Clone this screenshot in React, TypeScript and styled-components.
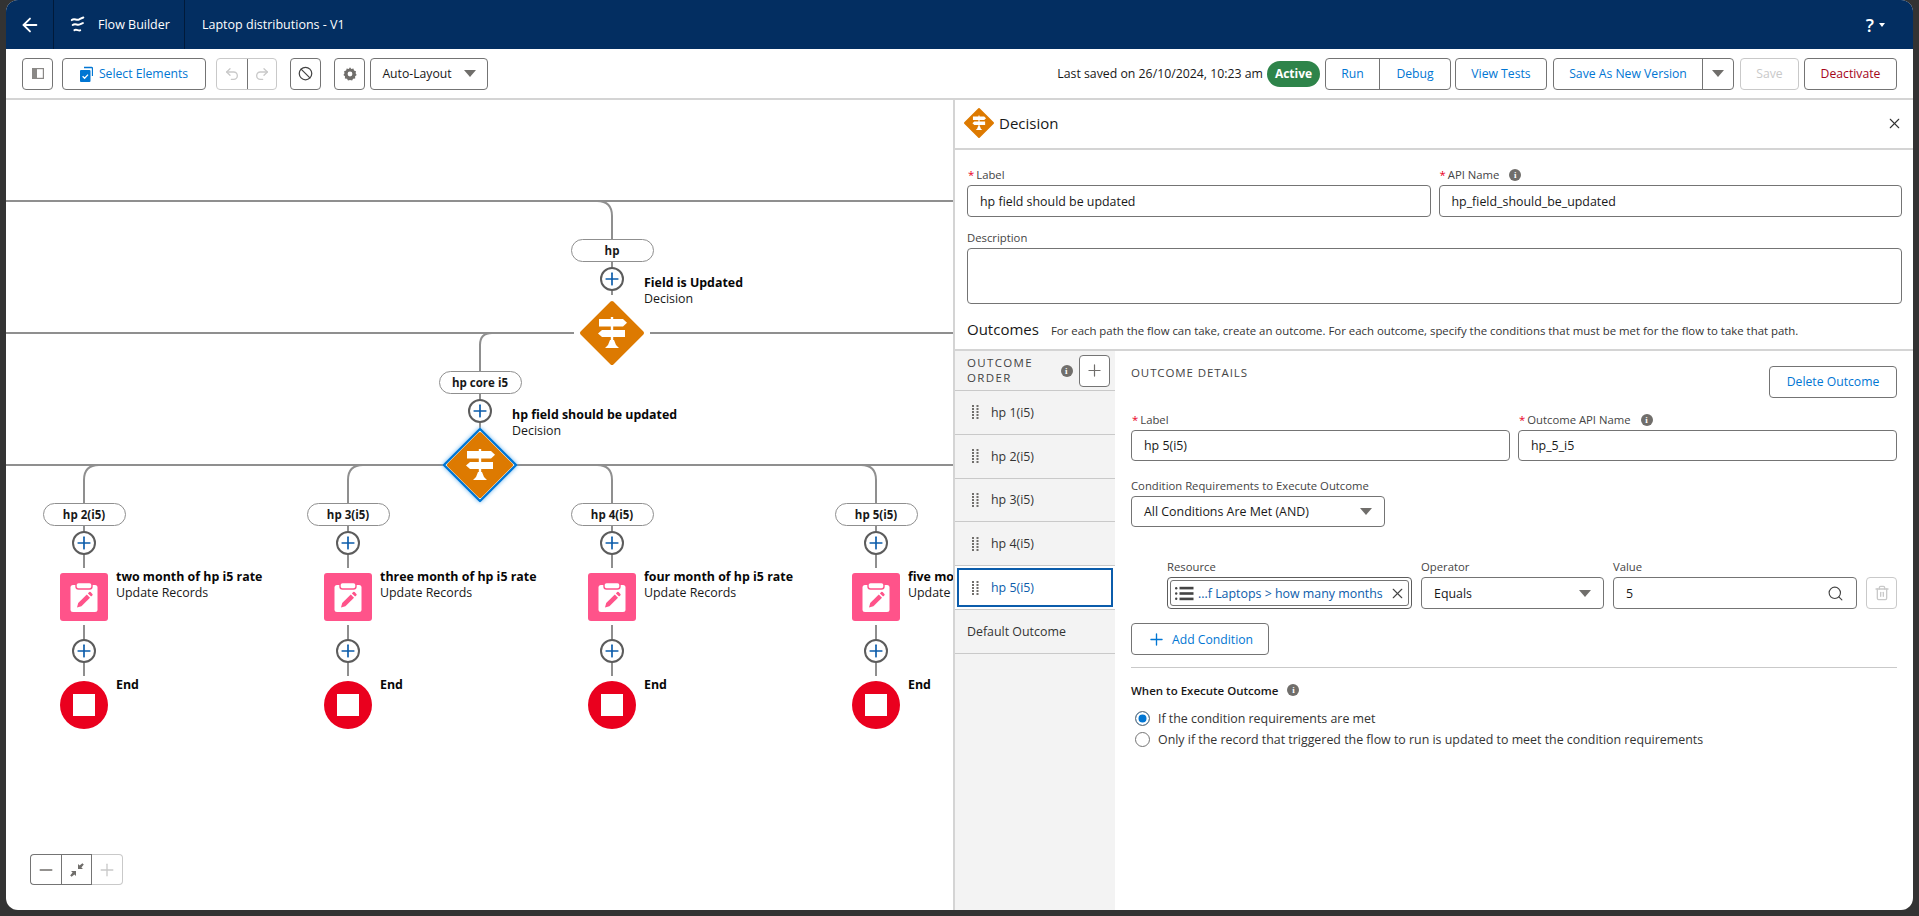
import React from "react";
import styled, { createGlobalStyle } from "styled-components";
import { Trash2, Search, X, ArrowLeft, Undo2, Redo2, Ban, Plus, Minus } from "lucide-react";

const GlobalStyle = createGlobalStyle`
  html, body { margin: 0; padding: 0; height: 100%; background: #333; overflow: hidden; }
  * { box-sizing: border-box; }
  body { font-family: "Open Sans", "Noto Sans", "Liberation Sans", sans-serif; font-size: 12.4px; color: #181818; }
`;

const CANVAS_X = 6;
const CANVAS_Y = 100;

const Frame = styled.div`
  width: 1907px;
  height: 910px;
  margin-left: 6px;
  background: #fff;
  border-radius: 12px;
  overflow: hidden;
  display: flex;
  flex-direction: column;
`;

const Nav = styled.header`
  height: 49px;
  background: #032e61;
  color: #fff;
  display: flex;
  align-items: center;
  flex-shrink: 0;
`;

const BackCell = styled.div`
  width: 48px;
  height: 100%;
  display: flex;
  align-items: center;
  justify-content: center;
  border-right: 1px solid #011a3a;
  flex-shrink: 0;
`;

const BrandCell = styled.div`
  width: 131px;
  height: 100%;
  display: flex;
  align-items: center;
  gap: 12px;
  padding-left: 16px;
  border-right: 1px solid #011a3a;
  font-size: 12.5px;
  flex-shrink: 0;
`;

const NavTitle = styled.div`
  padding-left: 17px;
  font-size: 12.5px;
  flex: 1;
`;

const HelpMenu = styled.div`
  display: flex;
  align-items: center;
  gap: 5px;
  padding-right: 28px;
  font-size: 18px;
  font-weight: 600;
  i {
    width: 0;
    height: 0;
    border-left: 3px solid transparent;
    border-right: 3px solid transparent;
    border-top: 4px solid #fff;
  }
`;

const Toolbar = styled.div`
  height: 51px;
  flex-shrink: 0;
  border-bottom: 2px solid #d4d4d4;
  display: flex;
  align-items: center;
  padding: 0 16px;
`;

const Btn = styled.div<{ $w?: number; $tone?: "brand" | "danger" | "off" | "plain"; $ml?: number; $mt?: number }>`
  height: 32px;
  width: ${(p) => (p.$w ? `${p.$w}px` : "auto")};
  margin-left: ${(p) => p.$ml ?? 0}px;
  margin-top: ${(p) => p.$mt ?? 0}px;
  flex-shrink: 0;
  display: flex;
  align-items: center;
  justify-content: center;
  gap: 6px;
  background: #fff;
  border: 1px solid ${(p) => (p.$tone === "off" ? "#c9c9c9" : "#747474")};
  border-radius: 4px;
  white-space: nowrap;
  letter-spacing: 0;
  font-size: 12.2px;
  color: ${(p) =>
    p.$tone === "danger" ? "#a5061a" : p.$tone === "off" ? "#c9c9c9" : p.$tone === "plain" ? "#181818" : "#0176d3"};
`;

const BtnGroup = styled.div<{ $ml?: number; $off?: boolean }>`
  display: flex;
  height: 32px;
  margin-left: ${(p) => p.$ml ?? 0}px;
  flex-shrink: 0;
  border: 1px solid ${(p) => (p.$off ? "#c9c9c9" : "#747474")};
  border-radius: 4px;
  overflow: hidden;
  font-size: 12.2px;
`;

const GroupItem = styled.div<{ $w: number; $off?: boolean }>`
  width: ${(p) => p.$w}px;
  display: flex;
  align-items: center;
  justify-content: center;
  color: ${(p) => (p.$off ? "#c9c9c9" : "#0176d3")};
  & + & {
    border-left: 1px solid ${(p) => (p.$off ? "#c9c9c9" : "#747474")};
  }
`;

const Caret = styled.i<{ $ml?: number }>`
  width: 0;
  height: 0;
  margin-left: ${(p) => p.$ml ?? 0}px;
  border-left: 6px solid transparent;
  border-right: 6px solid transparent;
  border-top: 7px solid #706e6b;
  flex-shrink: 0;
`;

const SavedText = styled.div`
  margin-left: auto;
  font-size: 12.3px;
  white-space: nowrap;
`;

const ActiveBadge = styled.div`
  margin-left: 4px;
  width: 53px;
  height: 26px;
  border-radius: 13px;
  background: #2e844a;
  color: #fff;
  font-weight: 700;
  font-size: 12px;
  display: flex;
  align-items: center;
  justify-content: center;
`;

const Body = styled.main`
  flex: 1;
  display: flex;
  min-height: 0;
`;

const Canvas = styled.section`
  position: relative;
  width: 947px;
  flex-shrink: 0;
  overflow: hidden;
`;

const Wires = styled.svg`
  position: absolute;
  left: 0;
  top: 0;
  fill: none;
  stroke: #8f8f8f;
  stroke-width: 2;
`;

const Pill = styled.div<{ $x: number; $y: number }>`
  position: absolute;
  left: ${(p) => p.$x - CANVAS_X - 41.5}px;
  top: ${(p) => p.$y - CANVAS_Y}px;
  width: 83px;
  height: 23px;
  background: #fff;
  border: 1px solid #8f8f8f;
  border-radius: 12px;
  font-weight: 700;
  font-size: 11.5px;
  display: flex;
  align-items: center;
  justify-content: center;
`;

const AddNode = styled.div<{ $x: number; $y: number }>`
  position: absolute;
  left: ${(p) => p.$x - CANVAS_X - 12}px;
  top: ${(p) => p.$y - CANVAS_Y - 12}px;
  width: 24px;
  height: 24px;
  border-radius: 50%;
  background: #fff;
  border: 2px solid #5c5c5c;
  color: #0b5cab;
  display: flex;
  align-items: center;
  justify-content: center;
`;

const NodeShape = styled.div<{ $x: number; $y: number; $size: number }>`
  position: absolute;
  left: ${(p) => p.$x - CANVAS_X - p.$size / 2}px;
  top: ${(p) => p.$y - CANVAS_Y - p.$size / 2}px;
  width: ${(p) => p.$size}px;
  height: ${(p) => p.$size}px;
`;

const UpdateTile = styled(NodeShape)`
  background: #ff538a;
  border-radius: 3px;
  display: flex;
  align-items: center;
  justify-content: center;
`;

const EndDot = styled(NodeShape)`
  background: #ea001e;
  border-radius: 50%;
  display: flex;
  align-items: center;
  justify-content: center;
  &::after {
    content: "";
    width: 22px;
    height: 22px;
    background: #fff;
  }
`;

const NodeText = styled.div<{ $x: number; $y: number }>`
  position: absolute;
  left: ${(p) => p.$x - CANVAS_X}px;
  top: ${(p) => p.$y - CANVAS_Y}px;
  line-height: 16px;
  font-size: 12.4px;
  white-space: nowrap;
  b {
    display: block;
    font-weight: 700;
    color: #080707;
  }
`;

const ZoomBar = styled.div`
  position: absolute;
  left: 24px;
  top: 754px;
  display: flex;
  height: 31px;
`;

const ZoomBtn = styled.div<{ $off?: boolean }>`
  width: 31px;
  height: 31px;
  background: #fff;
  border: 1px solid ${(p) => (p.$off ? "#c9c9c9" : "#747474")};
  display: flex;
  align-items: center;
  justify-content: center;
  color: ${(p) => (p.$off ? "#c9c9c9" : "#706e6b")};
  &:first-child {
    border-radius: 4px 0 0 4px;
    border-right: none;
  }
  &:last-child {
    border-left: none;
    border-radius: 0 4px 4px 0;
  }
`;

const Panel = styled.aside`
  flex: 1;
  min-width: 0;
  border-left: 2px solid #d4d4d4;
  display: flex;
  flex-direction: column;
`;

const PanelHead = styled.div`
  height: 50px;
  flex-shrink: 0;
  border-bottom: 2px solid #d4d4d4;
  display: flex;
  align-items: center;
  padding: 0 10px 2px 9px;
  gap: 5px;
  font-size: 15px;
  svg:last-child {
    margin-left: auto;
  }
`;

const PanelForm = styled.div`
  padding: 16px 11px 0 12px;
  flex-shrink: 0;
`;

const FieldRow = styled.div<{ $mt?: number }>`
  display: grid;
  grid-template-columns: 1fr 1fr;
  gap: 8px;
  margin-top: ${(p) => p.$mt ?? 0}px;
`;

const Field = styled.div<{ $mt?: number; $w?: number }>`
  margin-top: ${(p) => p.$mt ?? 0}px;
  width: ${(p) => (p.$w ? `${p.$w}px` : "auto")};
  flex-shrink: 0;
`;

const Label = styled.div`
  height: 19px;
  padding-bottom: 2px;
  line-height: 17px;
  font-size: 11.3px;
  color: #444;
  display: flex;
  align-items: center;
  gap: 2px;
  white-space: nowrap;
  em {
    color: #ea001e;
    font-style: normal;
    margin-left: 1px;
  }
`;

const InfoDot = styled.span<{ $ml?: number }>`
  width: 12px;
  height: 12px;
  margin-left: ${(p) => p.$ml ?? 8}px;
  border-radius: 50%;
  background: #706e6b;
  color: #fff;
  font: 700 9px/12px "Liberation Serif", serif;
  text-align: center;
  flex-shrink: 0;
`;

const InputBox = styled.div<{ $h?: number }>`
  height: ${(p) => p.$h ?? 32}px;
  background: #fff;
  border: 1px solid #747474;
  border-radius: 4px;
  padding: 0 12px;
  display: flex;
  align-items: center;
  justify-content: space-between;
  white-space: nowrap;
`;

const Outcomes = styled.div`
  height: 45px;
  padding-top: 13px;
  line-height: 24px;
  display: flex;
  align-items: flex-start;
  gap: 12px;
  font-size: 11.4px;
  color: #333;
  strong {
    font-size: 15px;
    font-weight: 400;
    color: #181818;
  }
  span {
    padding-top: 2px;
  }
`;

const OutcomeArea = styled.div`
  flex: 1;
  min-height: 0;
  display: flex;
  border-top: 2px solid #d4d4d4;
`;

const Sidebar = styled.nav`
  width: 160px;
  flex-shrink: 0;
  background: #f3f3f3;
`;

const SideHead = styled.div`
  height: 40px;
  padding: 0 5px 0 12px;
  display: flex;
  align-items: center;
  border-bottom: 1.5px solid #c9c9c9;
  font-size: 11.5px;
  line-height: 15px;
  letter-spacing: 1.35px;
  color: #444;
  div:first-child {
    width: 88px;
    flex-shrink: 0;
    margin-top: -2px;
  }
`;

const SquareAdd = styled.div`
  width: 31px;
  height: 32px;
  margin-left: 6px;
  background: #fff;
  border: 1px solid #747474;
  border-radius: 4px;
  display: flex;
  align-items: center;
  justify-content: center;
  color: #706e6b;
`;

const SideItem = styled.div<{ $active?: boolean; $plain?: boolean }>`
  position: relative;
  height: 43.8px;
  padding-left: ${(p) => (p.$plain ? 12 : 17)}px;
  display: flex;
  align-items: center;
  gap: 12px;
  border-bottom: 1.5px solid #c9c9c9;
  color: ${(p) => (p.$active ? "#0b5cab" : "#333")};
  background: ${(p) => (p.$active ? "#fff" : "transparent")};
  &::before {
    content: "";
    display: ${(p) => (p.$active ? "block" : "none")};
    position: absolute;
    left: 2px;
    right: 2px;
    top: 2px;
    bottom: 2px;
    border: 2px solid #0b5cab;
  }
`;

const Details = styled.div`
  flex: 1;
  min-width: 0;
  padding: 15px 16px 0;
`;

const DetailsHead = styled.div`
  display: flex;
  justify-content: space-between;
  font-size: 11.5px;
  letter-spacing: 0.9px;
  color: #444;
  line-height: 14px;
`;

const ConditionRow = styled.div`
  margin: 31px 0 0 36px;
  display: flex;
  gap: 9px;
`;

const ResourceBox = styled.div`
  height: 32px;
  border: 1px solid #5c5c5c;
  border-radius: 4px;
  padding: 2px;
`;

const ResourceInner = styled.div`
  height: 26px;
  border: 1px solid #747474;
  border-radius: 3px;
  display: flex;
  align-items: center;
  padding: 0 2px 0 4px;
  gap: 4px;
  color: #0b5cab;
  white-space: nowrap;
  svg:last-child {
    margin-left: auto;
    color: #444;
  }
`;

const Divider = styled.hr`
  margin: 12px 0 0;
  border: none;
  border-top: 1.5px solid #c9c9c9;
`;

const WhenTitle = styled.div`
  margin-top: 13px;
  height: 18px;
  display: flex;
  align-items: center;
  font-weight: 600;
  font-size: 11.5px;
  color: #181818;
`;

const RadioList = styled.div`
  margin-top: 9px;
`;

const RadioRow = styled.div`
  height: 21px;
  display: flex;
  align-items: center;
  gap: 8px;
  color: #333;
`;

const RadioMark = styled.span<{ $on?: boolean }>`
  width: 15px;
  height: 15px;
  margin-left: 4px;
  border-radius: 50%;
  border: 1px solid #747474;
  background: ${(p) => (p.$on ? "#0176d3" : "#fff")};
  box-shadow: ${(p) => (p.$on ? "inset 0 0 0 2.5px #fff" : "none")};
  flex-shrink: 0;
`;

function SignIcon() {
  return (
    <g fill="#fff" stroke="none">
      <rect x="-1.2" y="-16" width="2.4" height="26" />
      <path d="M-13-14h24l4 3.7-4 3.7h-24z" />
      <path d="M-10-3h23v7h-23l-4-3.5z" />
      <path d="M-2 7h4l2 5 3 3h-14l3-3z" />
    </g>
  );
}

function Diamond({ x, y, selected, size = 64 }: { x?: number; y?: number; selected?: boolean; size?: number }) {
  const reach = selected ? 31 : 30;
  const art = (
    <svg width={size} height={size} viewBox={selected ? "-40 -40 80 80" : "-32 -32 64 64"} style={{ display: "block", overflow: "visible" }}>
      {selected && (
        <polygon
          points="0,-36 36,0 0,36 -36,0"
          fill="#fff"
          stroke="#0176d3"
          strokeWidth="2.4"
          strokeLinejoin="round"
          style={{ filter: "drop-shadow(0 0 2px #6bb6f0)" }}
        />
      )}
      <polygon
        points={`0,${-reach} ${reach},0 0,${reach} ${-reach},0`}
        fill="#dd7a01"
        stroke="#dd7a01"
        strokeWidth="4"
        strokeLinejoin="round"
      />
      <SignIcon />
    </svg>
  );
  if (x === undefined || y === undefined) return art;
  return (
    <NodeShape $x={x} $y={y} $size={size}>
      {art}
    </NodeShape>
  );
}

function ClipboardIcon() {
  return (
    <svg width="28" height="30" viewBox="0 0 28 30">
      <rect x="0.5" y="3" width="27" height="27" rx="2.5" fill="#fff" />
      <rect x="6" y="0.5" width="16" height="6.5" rx="2.5" fill="#fff" stroke="#ff538a" strokeWidth="1.4" />
      <path d="M7 25.5l1.2-4.4 8.6-8.6 3.2 3.2-8.6 8.6z" fill="#ff538a" />
      <path d="M17.9 11.4l1.3-1.3a1 1 0 0 1 1.4 0l1.8 1.8a1 1 0 0 1 0 1.4l-1.3 1.3z" fill="#ff538a" />
    </svg>
  );
}

function LogoIcon() {
  return (
    <svg width="16" height="20" viewBox="0 0 18 20" fill="none" stroke="#fff" strokeWidth="2.2" strokeLinecap="round">
      <path d="M2 4.5c3-2.6 5 .8 8-.6 1.8-.8 3-1.8 5-2.4" />
      <path d="M3 10c3-2.2 5 .6 8-.6 1.4-.6 2-1 3.5-1.6" />
      <path d="M5 15.8c2.4-1.4 4 .8 6.5.2" />
    </svg>
  );
}

function GripIcon() {
  return (
    <svg width="7" height="14" viewBox="0 0 7 14" fill="#706e6b">
      {[0, 1, 2, 3, 4].map((r) => (
        <React.Fragment key={r}>
          <rect x="0" y={r * 3} width="2" height="2" />
          <rect x="4.5" y={r * 3} width="2" height="2" />
        </React.Fragment>
      ))}
    </svg>
  );
}

function ListIcon() {
  return (
    <svg width="19" height="15" viewBox="0 0 19 15" fill="#444">
      <rect x="0" y="1" width="2.4" height="2.4" rx="1.2" />
      <rect x="0" y="6.3" width="2.4" height="2.4" rx="1.2" />
      <rect x="0" y="11.6" width="2.4" height="2.4" rx="1.2" />
      <rect x="4.5" y="0.8" width="14" height="2.6" />
      <rect x="4.5" y="6.2" width="14" height="2.6" />
      <rect x="4.5" y="11.6" width="14" height="2.6" />
    </svg>
  );
}

function PanelToggleIcon() {
  return (
    <svg width="12" height="11" viewBox="0 0 12 11">
      <rect x="0.6" y="0.6" width="10.8" height="9.8" fill="none" stroke="#8a8886" strokeWidth="1.2" />
      <rect x="1" y="1" width="4" height="9" fill="#8a8886" />
    </svg>
  );
}

function SelectIcon() {
  return (
    <svg width="13" height="16" viewBox="0 0 13 16">
      <path d="M4 1.5h7.5a1 1 0 0 1 1 1V10" fill="none" stroke="#0176d3" strokeWidth="1.3" />
      <rect x="0" y="4" width="10.5" height="12" rx="1" fill="#0176d3" />
      <path d="M2.6 10.2l2 2 3.4-3.6" fill="none" stroke="#fff" strokeWidth="1.3" />
    </svg>
  );
}

function GearIcon() {
  return (
    <svg width="14" height="14" viewBox="0 0 14 14">
      <path
        d="M7 0.3l1.3 1.7 2.1-.4.6 2 2 .7-.4 2 1.1 1.7-1.6 1.3.1 2.1-2.1.4-1 1.8-2.1-.7-2 .7-1-1.8-2.1-.4.1-2.1L.4 8l1.1-1.7-.4-2 2-.7.6-2 2.1.4z"
        fill="#706e6b"
      />
      <circle cx="7" cy="7" r="2.4" fill="#fff" />
    </svg>
  );
}

function ShrinkIcon() {
  return (
    <svg width="14" height="14" viewBox="0 0 14 14" fill="#706e6b">
      <path d="M8 1l1.6 1.6L12.4.2l1.4 1.4-2.4 2.8L13 6H8z" />
      <path d="M6 13l-1.6-1.6-2.8 2.4-1.4-1.4 2.4-2.8L1 8h5z" />
    </svg>
  );
}

const branches = [
  { x: 84, name: "hp 2(i5)", title: "two month of hp i5 rate", elbow: "left" },
  { x: 348, name: "hp 3(i5)", title: "three month of hp i5 rate", elbow: "left" },
  { x: 612, name: "hp 4(i5)", title: "four month of hp i5 rate", elbow: "right" },
  { x: 876, name: "hp 5(i5)", title: "five month of hp i5 rate", elbow: "right" },
];

const outcomeNames = ["hp 1(i5)", "hp 2(i5)", "hp 3(i5)", "hp 4(i5)", "hp 5(i5)"];

function FlowCanvas() {
  return (
    <Canvas>
      <Wires width="947" height="810" viewBox="6 100 947 810">
        <path d="M6 201H953" />
        <path d="M597 201q15 0 15 15V239M612 262V268M612 290V295" />
        <path d="M6 333H574M650 333H953" />
        <path d="M492 333q-12 0-12 12V371M480 394V400M480 422V428" />
        <path d="M6 465H953" />
        {branches.map((b) => (
          <path
            key={b.x}
            d={
              (b.elbow === "left"
                ? `M${b.x + 15} 465q-15 0-15 15V503`
                : `M${b.x - 15} 465q15 0 15 15V503`) +
              `M${b.x} 526V532M${b.x} 554V568M${b.x} 625V640M${b.x} 662V676`
            }
          />
        ))}
      </Wires>

      <Pill $x={612} $y={239}>hp</Pill>
      <AddNode $x={612} $y={279}><Plus size={22} strokeWidth={2} /></AddNode>
      <Diamond x={612} y={333} />
      <NodeText $x={644} $y={275}><b>Field is Updated</b>Decision</NodeText>

      <Pill $x={480} $y={371}>hp core i5</Pill>
      <AddNode $x={480} $y={411}><Plus size={22} strokeWidth={2} /></AddNode>
      <Diamond x={480} y={465} selected size={80} />
      <NodeText $x={512} $y={407}><b>hp field should be updated</b>Decision</NodeText>

      {branches.map((b) => (
        <React.Fragment key={b.x}>
          <Pill $x={b.x} $y={503}>{b.name}</Pill>
          <AddNode $x={b.x} $y={543}><Plus size={22} strokeWidth={2} /></AddNode>
          <UpdateTile $x={b.x} $y={597} $size={48}><ClipboardIcon /></UpdateTile>
          <NodeText $x={b.x + 32} $y={569}><b>{b.title}</b>Update Records</NodeText>
          <AddNode $x={b.x} $y={651}><Plus size={22} strokeWidth={2} /></AddNode>
          <EndDot $x={b.x} $y={705} $size={48} />
          <NodeText $x={b.x + 32} $y={677}><b>End</b></NodeText>
        </React.Fragment>
      ))}

      <ZoomBar>
        <ZoomBtn><Minus size={20} strokeWidth={1.6} /></ZoomBtn>
        <ZoomBtn><ShrinkIcon /></ZoomBtn>
        <ZoomBtn $off><Plus size={20} strokeWidth={1.6} /></ZoomBtn>
      </ZoomBar>
    </Canvas>
  );
}

function DecisionPanel() {
  return (
    <Panel>
      <PanelHead>
        <Diamond size={30} />
        Decision
        <X size={17} strokeWidth={1.5} color="#333" />
      </PanelHead>
      <PanelForm>
        <FieldRow>
          <Field>
            <Label><em>*</em>Label</Label>
            <InputBox>hp field should be updated</InputBox>
          </Field>
          <Field>
            <Label><em>*</em>API Name<InfoDot>i</InfoDot></Label>
            <InputBox>hp_field_should_be_updated</InputBox>
          </Field>
        </FieldRow>
        <Field $mt={12}>
          <Label>Description</Label>
          <InputBox $h={56} />
        </Field>
        <Outcomes>
          <strong>Outcomes</strong>
          <span>For each path the flow can take, create an outcome. For each outcome, specify the conditions that must be met for the flow to take that path.</span>
        </Outcomes>
      </PanelForm>
      <OutcomeArea>
        <Sidebar>
          <SideHead>
            <div>OUTCOME ORDER</div>
            <InfoDot $ml={6}>i</InfoDot>
            <SquareAdd><Plus size={19} strokeWidth={1.5} /></SquareAdd>
          </SideHead>
          {outcomeNames.map((name, i) => (
            <SideItem key={name} $active={i === 4}>
              <GripIcon />
              {name}
            </SideItem>
          ))}
          <SideItem $plain>Default Outcome</SideItem>
        </Sidebar>
        <Details>
          <DetailsHead>
            <span>OUTCOME DETAILS</span>
            <Btn $w={128}>Delete Outcome</Btn>
          </DetailsHead>
          <FieldRow $mt={13}>
            <Field>
              <Label><em>*</em>Label</Label>
              <InputBox $h={31}>hp 5(i5)</InputBox>
            </Field>
            <Field>
              <Label><em>*</em>Outcome API Name<InfoDot>i</InfoDot></Label>
              <InputBox $h={31}>hp_5_i5</InputBox>
            </Field>
          </FieldRow>
          <Field $mt={16} $w={254}>
            <Label>Condition Requirements to Execute Outcome</Label>
            <InputBox $h={31}>All Conditions Are Met (AND)<Caret /></InputBox>
          </Field>
          <ConditionRow>
            <Field $w={245}>
              <Label>Resource</Label>
              <ResourceBox>
                <ResourceInner>
                  <ListIcon />
                  ...f Laptops &gt; how many months
                  <X size={17} strokeWidth={1.6} />
                </ResourceInner>
              </ResourceBox>
            </Field>
            <Field $w={183}>
              <Label>Operator</Label>
              <InputBox>Equals<Caret /></InputBox>
            </Field>
            <Field $w={244}>
              <Label>Value</Label>
              <InputBox>5<Search size={17} strokeWidth={1.6} color="#444" /></InputBox>
            </Field>
            <Field $w={31}>
              <Label />
              <Btn $w={31} $tone="off"><Trash2 size={16} /></Btn>
            </Field>
          </ConditionRow>
          <Btn $w={138} $mt={14}><Plus size={19} strokeWidth={1.7} />Add Condition</Btn>
          <Divider />
          <WhenTitle>When to Execute Outcome<InfoDot $ml={9}>i</InfoDot></WhenTitle>
          <RadioList>
            <RadioRow><RadioMark $on />If the condition requirements are met</RadioRow>
            <RadioRow><RadioMark />Only if the record that triggered the flow to run is updated to meet the condition requirements</RadioRow>
          </RadioList>
        </Details>
      </OutcomeArea>
    </Panel>
  );
}

export default function App() {
  return (
    <>
      <GlobalStyle />
      <Frame>
        <Nav>
          <BackCell><ArrowLeft size={22} strokeWidth={2} /></BackCell>
          <BrandCell><LogoIcon />Flow Builder</BrandCell>
          <NavTitle>Laptop distributions - V1</NavTitle>
          <HelpMenu>?<i /></HelpMenu>
        </Nav>
        <Toolbar>
          <Btn $w={31}><PanelToggleIcon /></Btn>
          <Btn $w={144} $ml={9}><SelectIcon />Select Elements</Btn>
          <BtnGroup $ml={10} $off>
            <GroupItem $w={30} $off><Undo2 size={16} /></GroupItem>
            <GroupItem $w={29} $off><Redo2 size={16} /></GroupItem>
          </BtnGroup>
          <Btn $w={31} $ml={13} $tone="plain"><Ban size={15} strokeWidth={2} color="#444" /></Btn>
          <Btn $w={31} $ml={13}><GearIcon /></Btn>
          <Btn $w={118} $ml={5} $tone="plain">Auto-Layout<Caret $ml={6} /></Btn>
          <SavedText>Last saved on 26/10/2024, 10:23 am</SavedText>
          <ActiveBadge>Active</ActiveBadge>
          <BtnGroup $ml={5}>
            <GroupItem $w={53}>Run</GroupItem>
            <GroupItem $w={71}>Debug</GroupItem>
          </BtnGroup>
          <Btn $w={92} $ml={4}>View Tests</Btn>
          <BtnGroup $ml={6}>
            <GroupItem $w={148}>Save As New Version</GroupItem>
            <GroupItem $w={31}><Caret /></GroupItem>
          </BtnGroup>
          <Btn $w={59} $ml={6} $tone="off">Save</Btn>
          <Btn $w={93} $ml={5} $tone="danger">Deactivate</Btn>
        </Toolbar>
        <Body>
          <FlowCanvas />
          <DecisionPanel />
        </Body>
      </Frame>
    </>
  );
}
